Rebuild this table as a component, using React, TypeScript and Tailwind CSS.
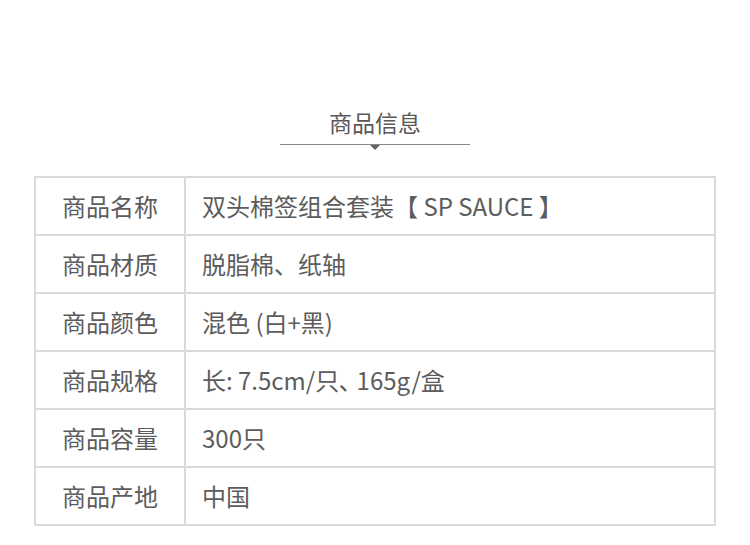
import React from "react";

const rows: [string, string][] = [
  ["商品名称", "双头棉签组合套装【 SP SAUCE 】"],
  ["商品材质", "脱脂棉、纸轴"],
  ["商品颜色", "混色 (白+黑)"],
  ["商品规格", "长: 7.5cm/只､ 165g/盒"],
  ["商品容量", "300只"],
  ["商品产地", "中国"],
];

export default function App() {
  return (
    <div
      className="w-[750px] h-[545px] bg-white overflow-hidden"
      style={{ fontFamily: '"Noto Sans CJK SC", "Noto Sans", sans-serif' }}
    >
      <div className="flex flex-col items-center pt-[106px]">
        <div className="text-[23px] leading-[32px] text-[#585858]">商品信息</div>
        <div className="relative mt-[6px] w-[190px] h-px bg-[#888]">
          <div className="absolute left-1/2 top-px -translate-x-1/2 w-0 h-0 border-l-[5px] border-r-[5px] border-t-[5px] border-l-transparent border-r-transparent border-t-[#666]" />
        </div>
      </div>
      <div className="ml-[34px] mt-[31px] w-[682px] border-2 border-[#dadada]">
        {rows.map(([k, v], i) => (
          <div
            key={k}
            className={`flex ${i > 0 ? "h-[58px] border-t-2 border-[#dadada]" : "h-[56px]"}`}
          >
            <div className="w-[150px] shrink-0 flex items-center justify-center pb-px text-[24px] text-[#5c5c5c] border-r-2 border-[#dadada]">
              {k}
            </div>
            <div className="flex items-center pl-[16px] pb-px text-[24px] text-[#5c5c5c] whitespace-pre">
              {v}
            </div>
          </div>
        ))}
      </div>
    </div>
  );
}
